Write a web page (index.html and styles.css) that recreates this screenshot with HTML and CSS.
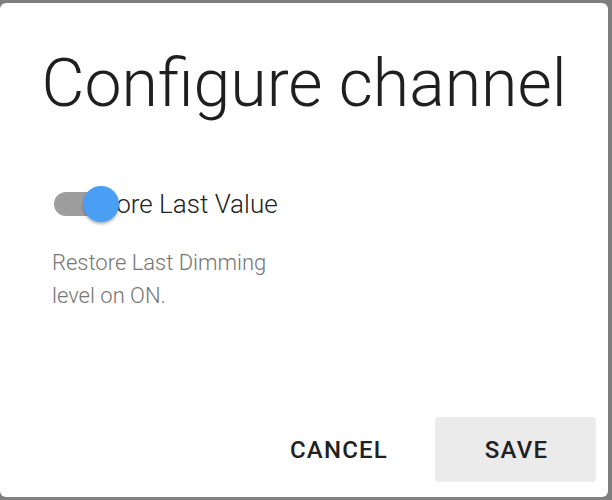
FILE: index.html
```html
<!DOCTYPE html>
<html lang="en">
<head>
  <meta charset="UTF-8" />
  <title>Configure channel</title>
  <link rel="stylesheet" href="styles.css">
</head>
<body>
  <div class="dialog">
    <h1 class="title">Configure channel</h1>
    <div class="content">
      <div class="switch-row">
        <span class="label">Restore Last Value</span>
        <span class="switch">
          <span class="track"></span>
          <span class="thumb"></span>
        </span>
      </div>
      <p class="help">Restore Last Dimming<br>level on ON.</p>
    </div>
    <div class="actions">
      <button class="btn">Cancel</button>
      <button class="btn btn-save">Save</button>
    </div>
  </div>
</body>
</html>
```

FILE: styles.css
```css
html, body {
  margin: 0;
  height: 100%;
}
body {
  background: #7f7f7f;
  font-family: Roboto, 'Liberation Sans', Arial, sans-serif;
  color: #212121;
}
.dialog {
  box-sizing: border-box;
  background: #fff;
  width: 608px;
  height: 494px;
  margin-top: 3px;
  border-radius: 6px;
  padding-top: 41px;
  display: flex;
  flex-direction: column;
}
.title {
  margin: 0;
  text-align: center;
  font-size: 66.2px;
  line-height: 80px;
  font-weight: 300;
  color: #1f1f1f;
}
.content {
  padding: 0 0 0 52px;
  flex: 1;
}
.switch-row {
  position: relative;
  margin-top: 60px;
  height: 40px;
  display: flex;
  align-items: center;
}
.label {
  padding-left: 13px;
  font-size: 26px;
  line-height: 40px;
  font-weight: 300;
}
.switch {
  position: absolute;
  left: 2px;
  top: 2px;
  width: 65px;
  height: 36px;
}
.track {
  position: absolute;
  left: 0;
  top: 6px;
  width: 56px;
  height: 24px;
  border-radius: 12px;
  background: #9e9e9e;
}
.thumb {
  position: absolute;
  left: 29px;
  top: 0;
  width: 36px;
  height: 36px;
  border-radius: 50%;
  background: #4a9ff5;
  box-shadow: 0 2px 3px rgba(0,0,0,0.3);
}
.help {
  margin: 22px 0 0 0;
  font-size: 22px;
  line-height: 33px;
  font-weight: 300;
  color: #757575;
}
.actions {
  display: flex;
  justify-content: flex-end;
  padding: 0 12px 15px 0;
}
.btn {
  border: none;
  background: transparent;
  font-family: inherit;
  font-size: 24px;
  font-weight: 500;
  letter-spacing: 1.2px;
  text-transform: uppercase;
  color: #212121;
  height: 65px;
  padding: 0 47px 0 49px;
  border-radius: 4px;
}
.btn-save {
  width: 161px;
  background: #ebebeb;
}
```
